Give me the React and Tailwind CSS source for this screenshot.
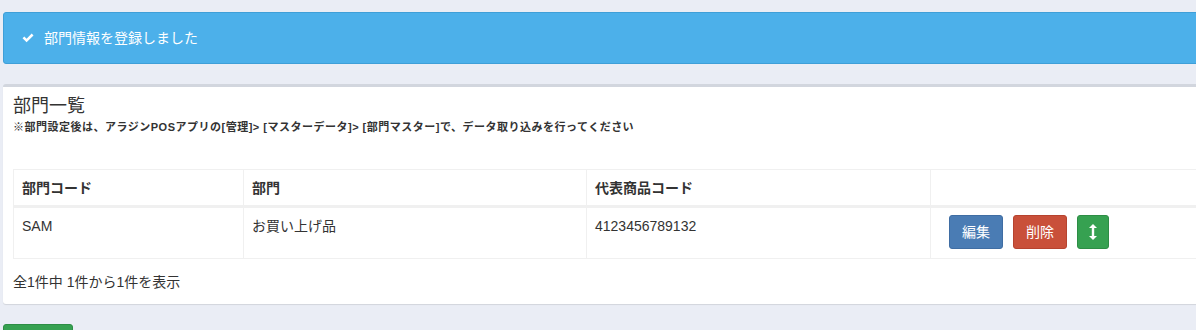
import React from "react";

const font = { fontFamily: '"Liberation Sans", "Noto Sans CJK JP", sans-serif' };

const CheckIcon = () => (
  <svg width="12" height="10" viewBox="0 0 12 10" className="fill-white">
    <path d="M0.5 5.2 L2.3 3.4 L4.6 5.7 L9.7 0.6 L11.5 2.4 L4.6 9.3 Z" />
  </svg>
);

const SortIcon = () => (
  <svg width="8" height="16" viewBox="0 0 8 16" className="fill-white">
    <path d="M4 0 L8 4 L5.2 4 L5.2 12 L8 12 L4 16 L0 12 L2.8 12 L2.8 4 L0 4 Z" />
  </svg>
);

const App = () => {
  return (
    <div style={font} className="w-[1196px] h-[330px] overflow-hidden bg-[#eaedf5] text-[#333] text-sm">
      <div className="w-[1280px] pl-[3px] pt-3">
        {/* alert */}
        <div className="h-[52px] flex items-center gap-[10px] pl-[18px] bg-[#4cb0ea] border border-[#3f9fd8] rounded-[3px] text-white text-sm">
          <CheckIcon />
          <span>部門情報を登録しました</span>
        </div>

        {/* box */}
        <div className="mt-[20px] bg-white border-t-[3px] border-[#d2d6de] rounded-[3px] shadow-[0_1px_1px_rgba(0,0,0,0.1)]">
          <div className="px-[10px] pt-[7px]">
            <h3 className="text-[18px] leading-[24px] text-[#333]">部門一覧</h3>
            <p className="text-[11px] font-bold leading-[16px] mt-[1px] tracking-[0.5px]">
              ※部門設定後は、アラジンPOSアプリの[管理]&gt; [マスターデータ]&gt; [部門マスター]で、データ取り込みを行ってください
            </p>
          </div>
          <div className="px-[10px] pt-[34px] pb-[12px]">
            <table className="w-[1260px] border-collapse border border-[#f0f0f0] table-fixed">
              <thead>
                <tr className="h-[37px] border-b-[3px] border-[#f0f0f0]">
                  <th className="w-[230px] text-left font-bold px-[8px] border border-[#f0f0f0]">部門コード</th>
                  <th className="w-[343px] text-left font-bold px-[8px] border border-[#f0f0f0]">部門</th>
                  <th className="w-[344px] text-left font-bold px-[8px] border border-[#f0f0f0]">代表商品コード</th>
                  <th className="text-left font-bold px-[8px] border border-[#f0f0f0]"></th>
                </tr>
              </thead>
              <tbody>
                <tr className="h-[52px]">
                  <td className="align-top px-[8px] pt-[8px] border border-[#f0f0f0]">SAM</td>
                  <td className="align-top px-[8px] pt-[8px] border border-[#f0f0f0]">お買い上げ品</td>
                  <td className="align-top px-[8px] pt-[8px] border border-[#f0f0f0]">4123456789132</td>
                  <td className="align-top pl-[18px] pt-[7px] border border-[#f0f0f0]">
                    <div className="flex gap-[10px]">
                      <button className="w-[54px] h-[34px] bg-[#4a7cb4] border border-[#3f6da3] rounded-[3px] text-white">編集</button>
                      <button className="w-[54px] h-[34px] bg-[#c9503a] border border-[#b6432f] rounded-[3px] text-white">削除</button>
                      <button className="w-[32px] h-[34px] flex items-center justify-center bg-[#36a151] border border-[#2d8d45] rounded-[3px]">
                        <SortIcon />
                      </button>
                    </div>
                  </td>
                </tr>
              </tbody>
            </table>
            <div className="mt-[13px] leading-[20px]">全1件中 1件から1件を表示</div>
          </div>
        </div>

        <button className="mt-[20px] w-[70px] h-[34px] bg-[#36a151] border border-[#2d8d45] rounded-[3px]"></button>
      </div>
    </div>
  );
};

export default App;
